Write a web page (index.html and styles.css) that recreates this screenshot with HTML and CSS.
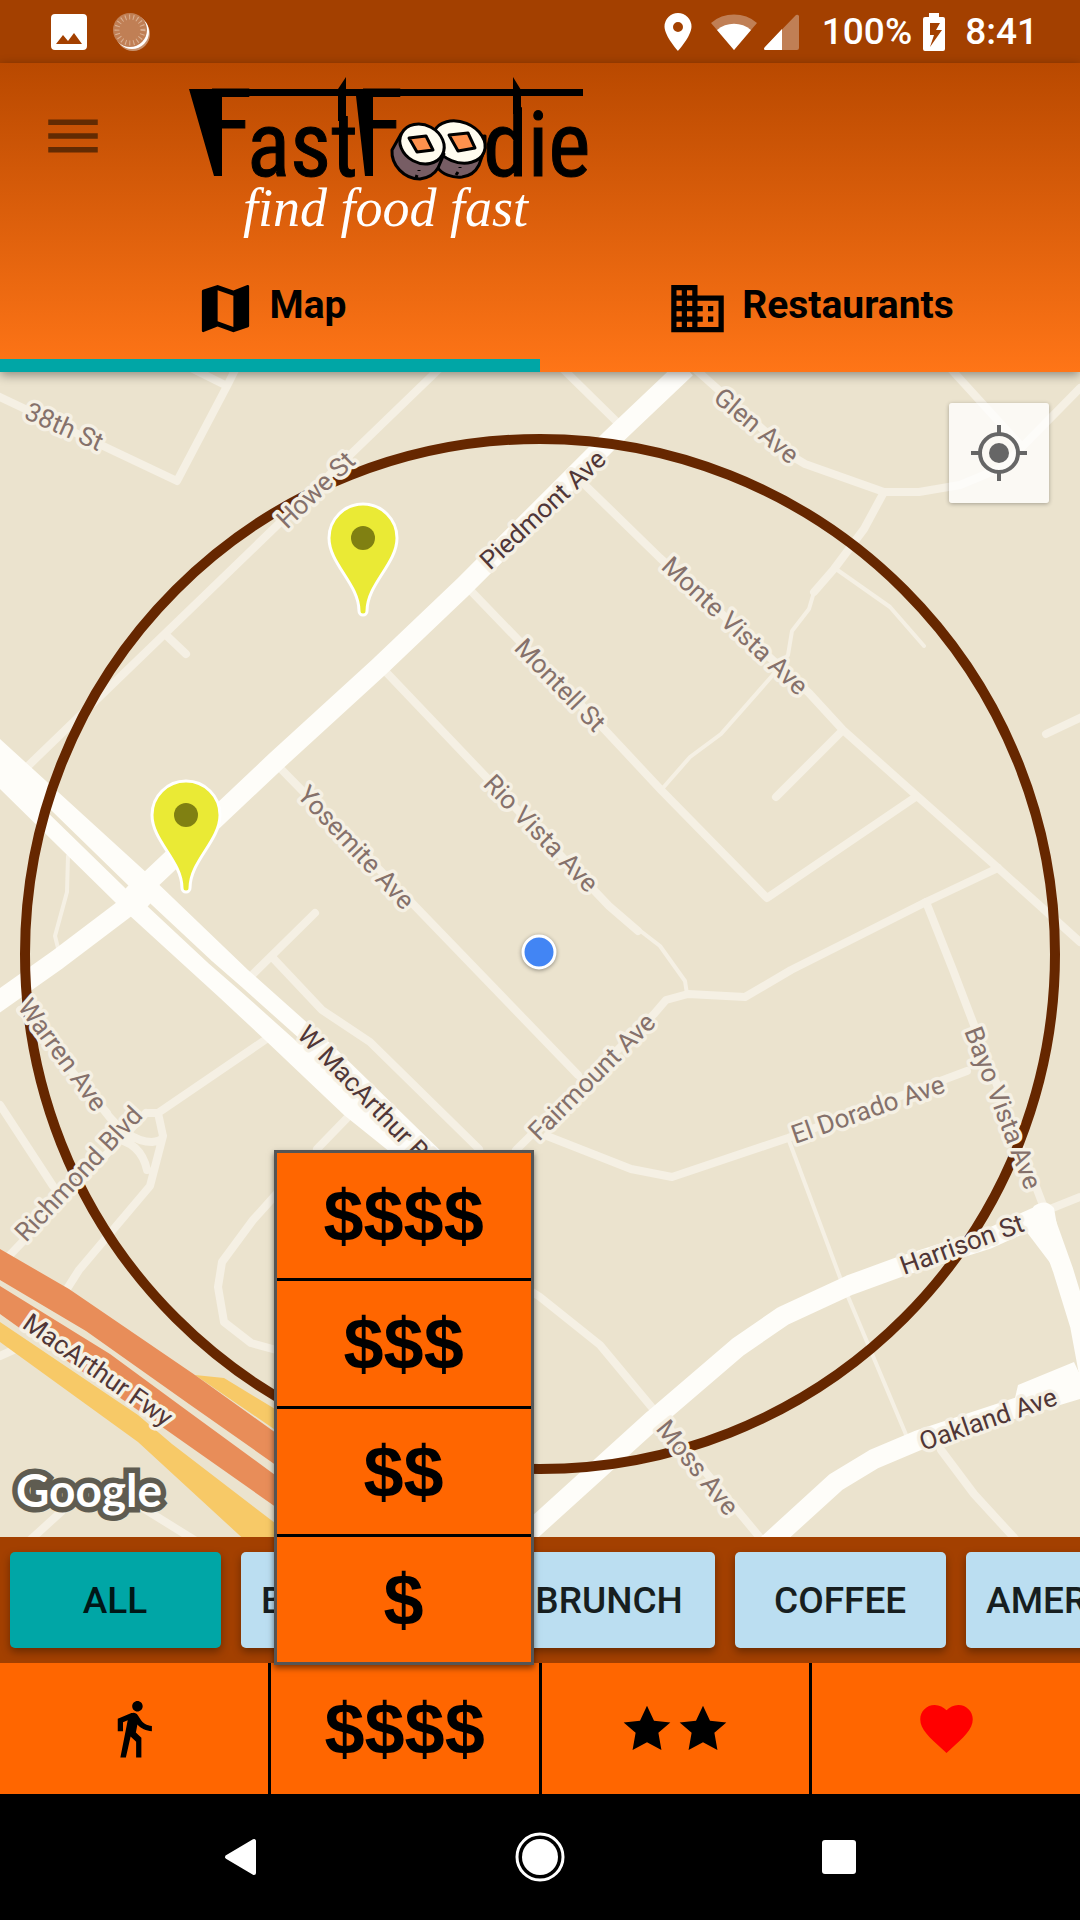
FILE: index.html
```html
<!DOCTYPE html>
<html lang="en">
<head>
<meta charset="utf-8">
<meta name="viewport" content="width=device-width, initial-scale=1">
<title>FastFoodie</title>
<link rel="stylesheet" href="styles.css">
</head>
<body>
<div class="app">
  <div class="status">
    <div class="status-group notices">
      <svg width="36" height="36" viewBox="0 0 36 36" aria-hidden="true"><path fill="#fff" fill-rule="evenodd" d="M4 0h28a4 4 0 0 1 4 4v28a4 4 0 0 1-4 4H4a4 4 0 0 1-4-4V4a4 4 0 0 1 4-4zM5 30h26l-8-11-6 8-5-6z"/></svg>
      <svg width="38" height="40" viewBox="0 0 38 40" aria-hidden="true"><circle cx="20" cy="22" r="17" fill="#c9926d"/><circle cx="19" cy="20" r="17" fill="#fff"/><circle cx="17" cy="18" r="17" fill="#c07f55"/><circle cx="17" cy="18" r="13" fill="none" stroke="#dbb294" stroke-width="5" stroke-dasharray="1 3"/></svg>
    </div>
    <div class="status-group signals">
      <svg class="pin" width="28" height="38" viewBox="0 0 28 38" aria-hidden="true"><path fill="#fff" fill-rule="evenodd" d="M14 0A13.500 13.500 0 0 0 .5 13.500C.5 23 14 38 14 38s13.500-15 13.500-24.500A13.500 13.500 0 0 0 14 0zm0 9a5 5 0 1 1 0 10 5 5 0 0 1 0-10z"/></svg>
      <svg class="wifi" width="46" height="38" viewBox="0 0 46 38" aria-hidden="true"><path fill="#c07f55" d="M0 10a35 35 0 0 1 46 0L23 37z"/><path fill="#fff" d="M6 17a26 26 0 0 1 34 0L23 37z"/></svg>
      <svg width="35" height="36" viewBox="0 0 35 36" aria-hidden="true"><path fill="#c07f55" d="M35 2v32q0 2-2 2H1q-2-1 0-3L32 1q2-1 3 1z"/><path fill="#fff" d="M18 15v21H1q-2-1 0-3z"/></svg>
      <span class="percent">100%</span>
      <svg class="battery" width="22" height="38" viewBox="0 0 22 38" aria-hidden="true"><path fill="#fff" fill-rule="evenodd" d="M6 0h10v4h4q2 0 2 2v30q0 2-2 2H2q-2 0-2-2V6q0-2 2-2h4zM7 10v12h4L7 34l12-17h-6l4-7z"/></svg>
      <span>8:41</span>
    </div>
  </div>

  <header class="header">
    <div class="bar">
      <button class="menu" aria-label="Menu"><svg width="66" height="66" viewBox="0 0 24 24" aria-hidden="true"><path d="M3 18h18v-2H3zm0-5h18v-2H3zm0-7v2h18V6z"/></svg></button>
      <svg class="logo" width="420" height="170" viewBox="0 0 420 170" role="img" aria-label="FastFoodie, find food fast">
        <path d="M9 19h394v7H42v80h-8zM158 19l8-12v44h-8zM333 7l8 13v24h-8zM176 26h17v80h-8z"/>
        <g class="wordmark"><text class="initial" x="25" y="89">F</text><text x="67" y="106">ast</text><text class="initial" x="176" y="89">F</text><text x="303" y="106">die</text></g>
        <g stroke="#000" stroke-width="3" stroke-linejoin="round">
          <path fill="#775d64" d="M258 98c4 6 14 10 24 9 8-1 14-6 17-12l6-17V66l-47 6z"/>
          <ellipse cx="279" cy="72" rx="27" ry="20" transform="rotate(22 279 72)" fill="#fffcef"/>
          <path fill="#775d64" d="M221 64l-9 16c-1 15 12 29 28 29 8-1 14-4 18-11l6-14z"/>
          <ellipse cx="242" cy="74" rx="23" ry="19" transform="rotate(28 242 74)" fill="#fffcef"/>
          <path fill="#ff914d" d="M229 68l17-2 7 14-16 2zM269 65l19-2 7 15-17 3z"/>
          <path fill="none" d="M239 100v1m-2 4l-1 3m44-11v1m-2 4l-2 3"/>
        </g>
        <text class="tagline" x="63" y="156">find food fast</text>
      </svg>
    </div>
    <nav class="tabs">
      <a class="tab active" href="#map"><svg width="63" height="63" viewBox="0 0 24 24" aria-hidden="true"><path d="M20.500 3l-.16.030L15 5.100 9 3 3.360 4.900c-.21.070-.36.250-.36.480V20.500c0 .28.220.5.500.5l.16-.030L9 18.900l6 2.100 5.640-1.900c.21-.070.360-.25.360-.48V3.500c0-.28-.22-.5-.5-.5zM15 19l-6-2.110V5l6 2.110z"/></svg><span>Map</span></a>
      <a class="tab" href="#restaurants"><svg width="63" height="63" viewBox="0 0 24 24" aria-hidden="true"><path d="M12 7V3H2v18h20V7zM6 19H4v-2h2zm0-4H4v-2h2zm0-4H4V9h2zm0-4H4V5h2zm4 12H8v-2h2zm0-4H8v-2h2zm0-4H8V9h2zm0-4H8V5h2zm10 12h-8v-2h2v-2h-2v-2h2v-2h-2V9h8zm-2-8h-2v2h2zm0 4h-2v2h2z"/></svg><span>Restaurants</span></a>
    </nav>
  </header>

  <main class="map" id="map">
    <svg class="canvas" viewBox="0 372 1080 1165" role="img" aria-label="Map of restaurants nearby">
      <g class="road">
        <path d="M0 397L177 481L227 386L236 368M187 366L227 386M440 368L28 766M167 636L186 654"/>
        <path d="M472 592L605 730L662 791L767 898L917 796M585 485L660 558L809 693L843 730L917 796L998 868L1080 942M560 366L617 422M843 730L776 797"/>
        <path d="M694 368L795 458L805 464L884 492H919L960 485L1001 468L1022 447L1080 388M950 368L1022 447M884 492L864 529L834 569L814 592M1084 716L1046 734"/>
        <path d="M386 672L609 906L638 931M998 868L926 902L791 970L745 997L688 994L666 1000L654 1014L516 1150M547 1136L631 1169L672 1177L788 1138L967 1071"/>
        <path d="M926 902L953 970L974 1025L1043 1205M1050 1209L1080 1197M282 770L413 904L578 1075M315 913L238 989M272 957L322 1010L370 1042L479 1149"/>
        <path d="M265 1040L158 1113H146M348 1117L317 1149M103 1109Q128 1142 152 1142Q162 1141 163 1136L158 1113M163 1136L150 1186L79 1270L65 1292M112 1138Q141 1142 147 1170M0 1105L53 1186M146 1113L7 1258M20 1010L107 1113"/>
        <path d="M280 1190L253 1220L222 1262L218 1287L224 1322L251 1343L280 1351M0 1356L20 1347M28 1542L62 1511M130 1500L196 1541M490 1265L540 1297L600 1345L654 1410L762 1540M941 1450L974 1494L1018 1542"/>
        <path class="thin" d="M68 856L67 892L55 936L58 948M814 592L809 609L792 631L788 655L772 676L721 734L690 757L662 789M836 569L890 607L924 646M638 929L660 946L685 981L687 994M788 1138L841 1280L907 1437"/>
      </g>
      <g class="major">
        <path d="M686 368L609 441L463 587L379 667L274 763L148 882L131 904L57 960L-8 1006"/>
        <path d="M515 1545L654 1419L738 1347L783 1316L850 1285L902 1266L988 1239L1043 1214L1063 1270L1080 1325L1092 1390M768 1544L836 1482L874 1459L919 1440L1022 1406L1090 1378"/>
        <path class="fill" d="M0 739L148 874L248 970L330 1043L450 1160H400L344 1115L265 1040L220 998L117 904L0 789zM1022 1226L1034 1206Q1046 1198 1054 1208L1068 1290L1054 1268L1032 1239zM1018 1385L1074 1362L1090 1396L1010 1420z"/>
      </g>
      <path class="median" d="M48 810L127 887M149 905L210 962L241 989L298 1040"/>
      <path class="ramp" d="M0 1322L138 1415L172 1444L275 1523L290 1545H250L138 1442L0 1342zM195 1375L224 1378L290 1418V1440z"/>
      <path class="freeway" d="M0 1249L69 1289L195 1375L290 1443V1475L189 1404L86 1331L0 1280zM0 1286L110 1354L189 1412L290 1486V1517L165 1429L21 1329L0 1314z"/>
      <circle class="radius" cx="540" cy="954" r="515"/>
      <g class="street">
        <text transform="translate(23 418) rotate(24)">38th St</text>
        <text transform="translate(287 530) rotate(-44)">Howe St</text>
        <text transform="translate(712 400) rotate(40)">Glen Ave</text>
        <text transform="translate(660 568) rotate(43)">Monte Vista Ave</text>
        <text transform="translate(513 649) rotate(46)">Montell St</text>
        <text transform="translate(482 785) rotate(46)">Rio Vista Ave</text>
        <text transform="translate(296 796) rotate(47)">Yosemite Ave</text>
        <text transform="translate(17 1007) rotate(54)">Warren Ave</text>
        <text transform="translate(26 1243) rotate(-47)">Richmond Blvd</text>
        <text transform="translate(539 1142) rotate(-45)">Fairmount Ave</text>
        <text transform="translate(795 1144) rotate(-19)">El Dorado Ave</text>
        <text transform="translate(964 1031) rotate(69)">Bayo Vista Ave</text>
        <text transform="translate(655 1429) rotate(51)">Moss Ave</text>
        <g class="avenue">
          <text transform="translate(490 571) rotate(-43)">Piedmont Ave</text>
          <text transform="translate(296 1036) rotate(46)">W MacArthur Blvd</text>
          <text transform="translate(904 1275) rotate(-20)">Harrison St</text>
          <text transform="translate(923 1451) rotate(-19)">Oakland Ave</text>
          <text transform="translate(21 1327) rotate(35)">MacArthur Fwy</text>
        </g>
      </g>
      <g class="marker" transform="translate(363 538)"><path d="M-34 0A34 34 0 0 1 34 0C34 26 4 46 4 73A4 4 0 0 1-4 73C-4 46-34 26-34 0z"/><circle r="12"/></g>
      <g class="marker" transform="translate(186 815)"><path d="M-34 0A34 34 0 0 1 34 0C34 26 4 46 4 73A4 4 0 0 1-4 73C-4 46-34 26-34 0z"/><circle r="12"/></g>
      <circle class="me" cx="539" cy="952" r="16"/>
      <text class="attribution" x="16" y="1507">Google</text>
    </svg>
    <button class="locate" aria-label="My location"><svg width="56" height="56" viewBox="0 0 56 56" aria-hidden="true"><circle cx="28" cy="28" r="10" fill="#666"/><path d="M28 0v9m0 38v9M0 28h9m38 0h9" stroke="#666" stroke-width="4"/><circle cx="28" cy="28" r="19" fill="none" stroke="#666" stroke-width="4"/></svg></button>
  </main>

  <div class="chips">
    <button class="chip selected">ALL</button>
    <button class="chip">BREAKFAST</button>
    <button class="chip">BRUNCH</button>
    <button class="chip">COFFEE</button>
    <button class="chip">AMERICAN</button>
  </div>

  <div class="filters">
    <button class="filter" aria-label="Walking distance"><svg width="63" height="63" viewBox="0 0 24 24" aria-hidden="true"><path d="M13.500 5.500c1.100 0 2-.9 2-2s-.9-2-2-2-2 .9-2 2 .9 2 2 2zM9.800 8.900L7 23h2.100l1.800-8 2.100 2v6h2v-7.500l-2.100-2 .6-3C14.800 12 16.800 13 19 13v-2c-1.900 0-3.500-1-4.300-2.400l-1-1.600c-.4-.6-1-1-1.700-1-.3 0-.5.1-.8.1L6 8.300V13h2V9.600z"/></svg></button>
    <div class="price">
      <button class="filter" aria-haspopup="true" aria-expanded="true">$$$$</button>
      <div class="price-menu">
        <button>$$$$</button>
        <button>$$$</button>
        <button>$$</button>
        <button>$</button>
      </div>
    </div>
    <button class="filter" aria-label="Two stars or more"><svg width="56" height="56" viewBox="0 0 24 24" aria-hidden="true"><path d="M12 17.700L18.180 21l-1.300-7.400L22 9.200l-7-.7L12 2 9 8.500l-7 .7 5.120 4.400L5.820 21z"/></svg><svg width="56" height="56" viewBox="0 0 24 24" aria-hidden="true"><path d="M12 17.700L18.180 21l-1.300-7.400L22 9.200l-7-.7L12 2 9 8.500l-7 .7 5.120 4.400L5.820 21z"/></svg></button>
    <button class="filter favorite" aria-label="Favorites"><svg width="63" height="63" viewBox="0 0 24 24" aria-hidden="true"><path d="M12 21.350l-1.450-1.320C5.400 15.360 2 12.280 2 8.500 2 5.420 4.420 3 7.500 3c1.740 0 3.410.81 4.500 2.090C13.090 3.810 14.760 3 16.500 3 19.580 3 22 5.420 22 8.500c0 3.780-3.400 6.860-8.550 11.540z"/></svg></button>
  </div>

  <div class="system">
    <button aria-label="Back"><svg width="34" height="38" viewBox="0 0 34 38" aria-hidden="true"><path d="M3 19L30 3v32z" fill="#fff" stroke="#fff" stroke-width="4" stroke-linejoin="round"/></svg></button>
    <button aria-label="Home"><svg width="50" height="50" viewBox="0 0 50 50" aria-hidden="true"><circle cx="25" cy="25" r="18" fill="#fff"/><circle cx="25" cy="25" r="23" fill="none" stroke="#fff" stroke-width="3"/></svg></button>
    <button aria-label="Recent apps"><svg width="34" height="34" viewBox="0 0 34 34" aria-hidden="true"><rect width="34" height="34" rx="3" fill="#fff"/></svg></button>
  </div>
</div>
</body>
</html>
```
FILE: styles.css
```css
* { box-sizing: border-box; }

body {
  margin: 0;
  background: #000;
  color: #000;
  font-family: Roboto, "Liberation Sans", sans-serif;
}

button {
  margin: 0;
  padding: 0;
  border: 0;
  background: none;
  color: inherit;
  font: inherit;
}

svg { display: block; flex: none; }

.app {
  display: flex;
  flex-direction: column;
  min-height: 100vh;
  overflow: hidden;
}

/* System status bar */
.status {
  display: flex;
  justify-content: space-between;
  align-items: center;
  height: 63px;
  padding: 0 42px 0 51px;
  background: #a34000;
  color: #fff;
  font-size: 37px;
  font-weight: 500;
  line-height: 40px;
}

.status-group { display: flex; align-items: center; }
.notices { gap: 26px; }
.pin { margin-right: 19px; }
.wifi { margin-right: 7px; }
.percent { margin-left: 23px; }
.battery { margin: 0 20px 0 11px; }

/* App bar and tabs */
.header {
  position: relative;
  z-index: 1;
  background: linear-gradient(#b94900, #ff7517);
  box-shadow: 0 3px 10px rgba(0, 0, 0, 0.4);
}

.bar {
  display: flex;
  align-items: flex-start;
  gap: 74px;
  height: 194px;
  padding: 7px 40px 0;
}

.menu { margin-top: 33px; }
.menu svg { fill: #622b03; }

.wordmark {
  stroke: #000;
  stroke-width: 1;
  font-family: "Liberation Sans Narrow", "Roboto Condensed", "DejaVu Sans Condensed", sans-serif;
  font-size: 90px;
}

.wordmark .initial { font-size: 98px; }

.tagline {
  fill: #fff;
  font-family: "Liberation Serif", serif;
  font-size: 54px;
  font-style: italic;
}

.tabs { display: grid; grid-template-columns: 1fr 1fr; }

.tab {
  display: flex;
  align-items: center;
  justify-content: center;
  gap: 13px;
  height: 115px;
  border-bottom: 13px solid transparent;
  color: #000;
  font-size: 39px;
  font-weight: 700;
  line-height: 44px;
  text-decoration: none;
}

.tab span { padding-bottom: 6px; }
.tab.active { border-color: #00a6a6; }

/* Map */
.map { position: relative; flex: 1; background: #ebe3ce; }
.canvas { width: 100%; height: auto; }

.road {
  fill: none;
  stroke: #f5f0e4;
  stroke-width: 8;
  stroke-linecap: round;
  stroke-linejoin: round;
}

.road .thin { stroke-width: 4; }
.major { fill: none; stroke: #fefdf9; stroke-width: 20; stroke-linejoin: round; }
.major .fill { fill: #fefdf9; stroke: none; }
.median { fill: none; stroke: #ebe3ce; stroke-width: 4; }
.ramp { fill: #f7c967; }
.freeway { fill: #e88d59; }
.radius { fill: none; stroke: #662700; stroke-width: 10; }

.street {
  fill: #85716b;
  stroke: #f5f0e4;
  stroke-width: 7;
  stroke-linejoin: round;
  paint-order: stroke;
  font-size: 26px;
}

.avenue { fill: #503637; }
.marker path { fill: #eaea35; stroke: #fff; stroke-width: 3; }
.marker circle { fill: #808012; }
.me { fill: #4285f4; stroke: #fff; stroke-width: 3; filter: drop-shadow(0 1px 2px rgba(0, 0, 0, 0.4)); }

.attribution {
  fill: #fff;
  stroke: #5f5c51;
  stroke-width: 11;
  paint-order: stroke;
  font-family: Lato, sans-serif;
  font-size: 46px;
  font-weight: 700;
}

.locate {
  position: absolute;
  top: 31px;
  right: 31px;
  display: grid;
  place-items: center;
  width: 100px;
  height: 100px;
  border-radius: 3px;
  background: rgba(255, 255, 255, 0.78);
  box-shadow: 0 1px 4px rgba(0, 0, 0, 0.3);
}

/* Cuisine chips */
.chips {
  display: flex;
  gap: 20px;
  padding: 15px 10px;
  overflow: hidden;
  background: #a34000;
}

.chip {
  flex: none;
  min-width: 211px;
  height: 96px;
  padding: 0 21px 0 20px;
  border-radius: 5px;
  background: #bbdef1;
  box-shadow: 0 4px 8px rgba(0, 0, 0, 0.35);
  color: #171e20;
  font-size: 37px;
  font-weight: 500;
}

.chip.selected { background: #00a6a6; color: #001717; }

/* Filters */
.filters {
  display: grid;
  grid-template-columns: repeat(4, 1fr);
  gap: 3px;
  height: 131px;
}

.filter {
  display: flex;
  align-items: center;
  justify-content: center;
  width: 100%;
  height: 100%;
  background: #f60;
}

.favorite svg { fill: #f00; }

.price {
  position: relative;
  font-family: "Liberation Sans", Arial, sans-serif;
  font-size: 72px;
  font-weight: 700;
  line-height: 80px;
}

.price-menu {
  position: absolute;
  right: 5px;
  bottom: calc(100% - 2px);
  left: 3px;
  display: grid;
  grid-auto-rows: 125px;
  gap: 3px;
  border: 3px solid #555;
  background: #000;
  box-shadow: 0 3px 6px rgba(0, 0, 0, 0.5);
}

.price-menu button { background: #f60; }

/* System navigation */
.system {
  display: grid;
  grid-template-columns: repeat(3, 1fr);
  height: 126px;
  padding: 0 92px;
  background: #000;
}

.system button { display: grid; place-items: center; }
```
